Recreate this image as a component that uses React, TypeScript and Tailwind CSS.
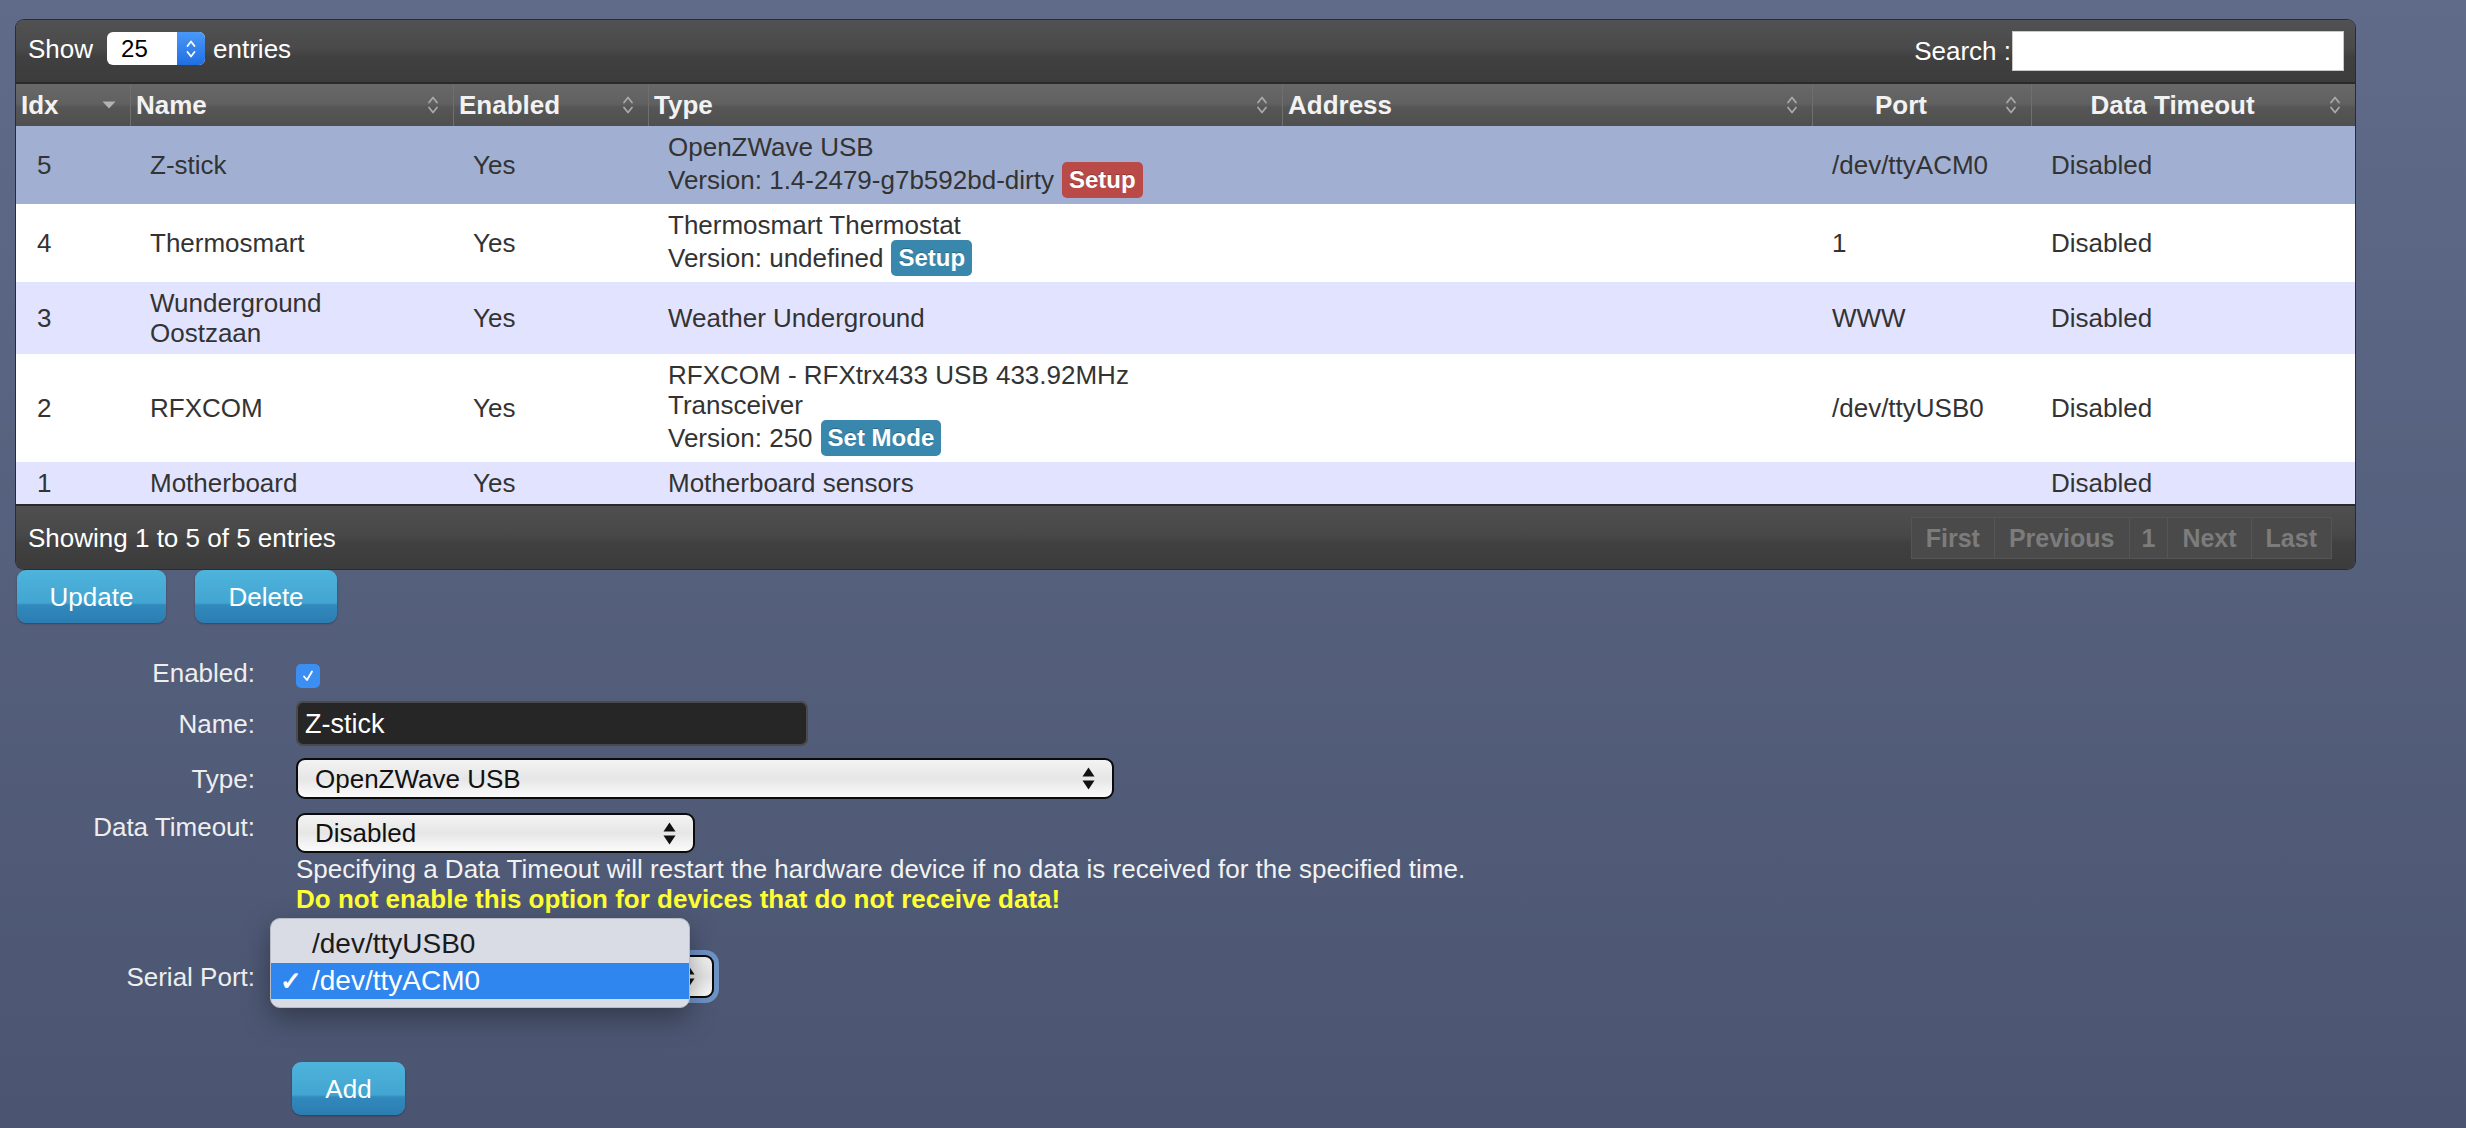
import React from "react";

type Row = {
  idx: string;
  name: string[];
  type: string[];
  version?: string;
  badge?: { label: string; className: string };
  port: string;
  bg: string;
  h: string;
};

const rows: Row[] = [
  {
    idx: "5",
    name: ["Z-stick"],
    type: ["OpenZWave USB"],
    version: "Version: 1.4-2479-g7b592bd-dirty",
    badge: { label: "Setup", className: "bg-[#b94a48]" },
    port: "/dev/ttyACM0",
    bg: "bg-[#a1b0d2]",
    h: "h-[78px]",
  },
  {
    idx: "4",
    name: ["Thermosmart"],
    type: ["Thermosmart Thermostat"],
    version: "Version: undefined",
    badge: { label: "Setup", className: "bg-[#3a87ad]" },
    port: "1",
    bg: "bg-white",
    h: "h-[78px]",
  },
  {
    idx: "3",
    name: ["Wunderground", "Oostzaan"],
    type: ["Weather Underground"],
    port: "WWW",
    bg: "bg-[#e2e4ff]",
    h: "h-[72px]",
  },
  {
    idx: "2",
    name: ["RFXCOM"],
    type: ["RFXCOM - RFXtrx433 USB 433.92MHz", "Transceiver"],
    version: "Version: 250",
    badge: { label: "Set Mode", className: "bg-[#3a87ad]" },
    port: "/dev/ttyUSB0",
    bg: "bg-white",
    h: "h-[108px]",
  },
  {
    idx: "1",
    name: ["Motherboard"],
    type: ["Motherboard sensors"],
    port: "",
    bg: "bg-[#e2e4ff]",
    h: "h-[42px]",
  },
];

function SortIcon() {
  return (
    <svg width="14" height="20" viewBox="0 0 14 20" className="shrink-0">
      <path d="M3 7.5 L7 2.5 L11 7.5" stroke="#a9a9a9" strokeWidth="1.8" fill="none" strokeLinecap="round" strokeLinejoin="round" />
      <path d="M3 12.5 L7 17.5 L11 12.5" stroke="#a9a9a9" strokeWidth="1.8" fill="none" strokeLinecap="round" strokeLinejoin="round" />
    </svg>
  );
}

function SortDown() {
  return (
    <svg width="14" height="8" viewBox="0 0 14 8" className="shrink-0">
      <path d="M0.5 0.5 L13.5 0.5 L7 7.5 Z" fill="#b3b3b3" />
    </svg>
  );
}

function SelectArrows() {
  return (
    <svg width="13" height="23" viewBox="0 0 13 23" className="shrink-0">
      <path d="M6.5 0.5 L12.5 9.5 L0.5 9.5 Z" fill="#111" />
      <path d="M0.5 13.5 L12.5 13.5 L6.5 22.5 Z" fill="#111" />
    </svg>
  );
}

const btn =
  "h-[53px] flex items-center justify-center rounded-[9px] text-white text-[26px] bg-[linear-gradient(to_bottom,#4eb4dc,#43a5d1_62%,#3189bc_66%,#2b7db2)] shadow-[0_1px_2px_rgba(0,0,0,0.3)]";

const selectBox =
  "flex items-center justify-between rounded-[9px] border-2 border-[#0b0b0b] bg-gradient-to-b from-[#f3f3f3] via-[#e6e6e6] to-[#fbfbfb] pl-[17px] pr-[17px] text-[26px] text-[#111]";

export default function App() {
  return (
    <div className="min-h-screen w-full bg-gradient-to-b from-[#5f6b89] to-[#4b5571] pt-[20px] pl-[16px] pb-[12px] font-['Liberation_Sans',Arial,sans-serif] text-[26px] leading-[30px]">
      {/* Hardware table */}
      <div className="w-[2339px] overflow-hidden rounded-[8px] shadow-[0_0_0_1px_#2c2c2c]">
        <div className="flex h-[62px] items-center justify-between bg-[linear-gradient(to_bottom,#515151,#4a4a4a_45%,#404040_60%,#3c3c3c)] pb-[5px] pl-[12px] pr-[11px] text-white">
          <div className="flex items-center">
            <span>Show</span>
            <div className="ml-[14px] flex h-[33px] w-[98px] overflow-hidden rounded-[6px] bg-white">
              <span className="flex-1 pl-[14px] text-[24px] leading-[33px] text-black">25</span>
              <div className="flex w-[28px] items-center justify-center bg-gradient-to-b from-[#4a98f7] to-[#1f6fe3]">
                <svg width="12" height="22" viewBox="0 0 12 22">
                  <path d="M2.5 8 L6 3.5 L9.5 8" stroke="#fff" strokeWidth="1.8" fill="none" strokeLinecap="round" strokeLinejoin="round" />
                  <path d="M2.5 14 L6 18.5 L9.5 14" stroke="#fff" strokeWidth="1.8" fill="none" strokeLinecap="round" strokeLinejoin="round" />
                </svg>
              </div>
            </div>
            <span className="ml-[8px]">entries</span>
          </div>
          <div className="flex items-center pt-[5px]">
            <span className="mr-[1px]">Search :</span>
            <div className="h-[40px] w-[332px] border border-[#c8c8c8] bg-white" />
          </div>
        </div>

        <div className="grid h-[44px] grid-cols-[114px_323px_195px_634px_530px_219px_324px] border-t-2 border-[#2a2a2a] bg-[linear-gradient(to_bottom,#686868,#606060_48%,#565656_55%,#4f4f4f)] font-bold text-[#f2f2f2]">
          <div className="flex items-center justify-between pl-[5px] pr-[14px]">
            <span>Idx</span>
            <SortDown />
          </div>
          <div className="flex items-center justify-between border-l border-[#6f6f6f] pl-[5px] pr-[13px]">
            <span>Name</span>
            <SortIcon />
          </div>
          <div className="flex items-center justify-between border-l border-[#6f6f6f] pl-[5px] pr-[13px]">
            <span>Enabled</span>
            <SortIcon />
          </div>
          <div className="flex items-center justify-between border-l border-[#6f6f6f] pl-[5px] pr-[13px]">
            <span>Type</span>
            <SortIcon />
          </div>
          <div className="flex items-center justify-between border-l border-[#6f6f6f] pl-[5px] pr-[13px]">
            <span>Address</span>
            <SortIcon />
          </div>
          <div className="flex items-center border-l border-[#6f6f6f] pl-[5px] pr-[13px]">
            <span className="flex-1 pr-[20px] text-center">Port</span>
            <SortIcon />
          </div>
          <div className="flex items-center border-l border-[#6f6f6f] pl-[5px] pr-[13px]">
            <span className="flex-1 pr-[20px] text-center">Data Timeout</span>
            <SortIcon />
          </div>
        </div>

        {rows.map((r) => (
          <div
            key={r.idx}
            className={`grid grid-cols-[114px_323px_195px_634px_530px_219px_324px] text-[#333] ${r.bg} ${r.h}`}
          >
            <div className="flex items-center pl-[21px]">{r.idx}</div>
            <div className="flex flex-col justify-center pl-[20px]">
              {r.name.map((n) => (
                <div key={n}>{n}</div>
              ))}
            </div>
            <div className="flex items-center pl-[20px]">Yes</div>
            <div className="flex flex-col justify-center pl-[20px]">
              {r.type.map((t) => (
                <div key={t}>{t}</div>
              ))}
              {r.version && (
                <div className="flex h-[36px] items-center gap-[8px]">
                  <span>{r.version}</span>
                  {r.badge && (
                    <span
                      className={`h-[36px] rounded-[5px] px-[7px] text-[24px] font-bold leading-[36px] text-white [text-shadow:0_-1px_0_rgba(0,0,0,0.25)] ${r.badge.className}`}
                    >
                      {r.badge.label}
                    </span>
                  )}
                </div>
              )}
            </div>
            <div />
            <div className="flex items-center pl-[20px]">{r.port}</div>
            <div className="flex items-center pl-[20px]">Disabled</div>
          </div>
        ))}

        <div className="flex h-[65px] items-center justify-between border-t-2 border-[#2a2a2a] bg-[linear-gradient(to_bottom,#4f4f4f,#484848_45%,#404040_60%,#3c3c3c)] pl-[12px] pr-[23px]">
          <span className="text-white">Showing 1 to 5 of 5 entries</span>
          <div className="flex h-[42px] border border-[#555] bg-[#4a4a4a] text-[25px] font-bold text-[#7c7c7c]">
            <span className="flex items-center px-[14px]">First</span>
            <span className="flex items-center border-l border-[#555] px-[14px]">Previous</span>
            <span className="flex items-center border-l border-[#555] px-[12px]">1</span>
            <span className="flex items-center border-l border-[#555] px-[14px]">Next</span>
            <span className="flex items-center border-l border-[#555] px-[14px]">Last</span>
          </div>
        </div>
      </div>

      {/* Actions */}
      <div className="ml-[1px] mt-[1px] flex gap-[29px]">
        <button className={`${btn} w-[149px]`}>Update</button>
        <button className={`${btn} w-[142px]`}>Delete</button>
      </div>

      {/* Edit form */}
      <div className="mt-[35px] flex items-start text-[#eeeeee]">
        <span className="w-[239px] text-right">Enabled:</span>
        <div className="ml-[41px] mt-[6px] flex h-[24px] w-[24px] items-center justify-center rounded-[5px] bg-[#3b8ef2]">
          <svg width="14" height="14" viewBox="0 0 14 14">
            <path d="M3 7.5 L6 11 L11 2.5" stroke="#fff" strokeWidth="1.8" fill="none" strokeLinecap="round" strokeLinejoin="round" />
          </svg>
        </div>
      </div>

      <div className="mt-[13px] flex items-center text-[#eeeeee]">
        <span className="w-[239px] text-right">Name:</span>
        <div className="ml-[41px] flex h-[45px] w-[512px] items-center rounded-[7px] border-2 border-[#4a4a4a] bg-[#262626] pl-[7px] text-[27px] text-white">
          Z-stick
        </div>
      </div>

      <div className="mt-[12px] flex items-center text-[#eeeeee]">
        <span className="w-[239px] text-right">Type:</span>
        <div className={`${selectBox} ml-[41px] h-[41px] w-[818px]`}>
          <span>OpenZWave USB</span>
          <SelectArrows />
        </div>
      </div>

      <div className="mt-[13px] flex items-start text-[#eeeeee]">
        <span className="w-[239px] text-right">Data Timeout:</span>
        <div className="ml-[41px] mt-[1px] flex flex-col">
          <div className={`${selectBox} h-[40px] w-[399px]`}>
            <span>Disabled</span>
            <SelectArrows />
          </div>
          <p className="mt-[1px] text-[#f2f2f2]">
            Specifying a Data Timeout will restart the hardware device if no data is received for the specified time.
          </p>
          <p className="font-bold text-[#ffff33]">Do not enable this option for devices that do not receive data!</p>
        </div>
      </div>

      <div className="mt-[41px] flex items-center text-[#eeeeee]">
        <span className="w-[239px] text-right">Serial Port:</span>
        <div className="relative ml-[41px]">
          {/* closed select, hidden under its open option list */}
          <div className={`${selectBox} h-[43px] w-[418px] justify-end ring-[5px] ring-[#6f93c6]`}>
            <SelectArrows />
          </div>
          <div className="absolute left-[-26px] top-[-37px] w-[420px] overflow-hidden rounded-[10px] border border-[#b9bcc6] bg-[#d9dce4] pt-[6px] pb-[8px] text-[28px] shadow-[0_10px_28px_rgba(0,0,0,0.35)]">
            <div className="flex h-[38px] items-center pl-[41px] text-[#1b1b1b]">/dev/ttyUSB0</div>
            <div className="flex h-[36px] items-center bg-[#2f86ee] text-white">
              <span className="w-[41px] pl-[9px] text-[26px] font-bold">✓</span>
              <span>/dev/ttyACM0</span>
            </div>
          </div>
        </div>
      </div>

      <button className={`${btn} ml-[276px] mt-[64px] w-[113px]`}>Add</button>
    </div>
  );
}
